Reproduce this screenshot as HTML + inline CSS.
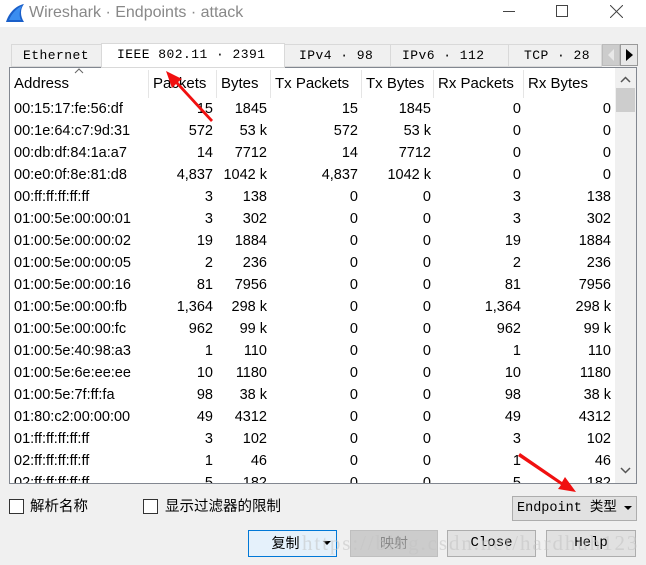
<!DOCTYPE html>
<html><head><meta charset="utf-8"><style>
*{margin:0;padding:0;box-sizing:border-box}
body{width:646px;height:565px;background:#f0f0f0;position:relative;overflow:hidden;font-family:"Liberation Sans","Noto Sans CJK SC",sans-serif}
.abs{position:absolute}
.title{left:0;top:0;width:646px;height:27px;background:#fff}
.tab{position:absolute;top:44px;height:23px;border:1px solid #d9d9d9;background:#f0f0f0;font-family:"Liberation Mono","Noto Sans CJK SC",monospace;font-size:13px;letter-spacing:0.45px;line-height:22px;color:#000;padding-left:11px;white-space:pre;overflow:hidden}
.frame{left:9px;top:67px;width:628px;height:417px;background:#fff;border:1px solid #828790;overflow:hidden}
.hd{position:absolute;top:2px;height:28px;font-size:15px;line-height:28px;border-right:1px solid #e5e5e5;padding-left:4px;color:#000}
.row{position:absolute;left:0;height:22px;width:605px;font-size:14.5px;line-height:22px}
.row span{position:absolute;text-align:right}
.btn{position:absolute;top:530px;height:27px;border:1px solid #adadad;background:#e1e1e1;font-size:14px;line-height:25px;text-align:center}
.cb{position:absolute;top:499px;width:15px;height:15px;border:1px solid #333;background:#fff}
.lbl{position:absolute;top:496px;font-size:14.5px;line-height:22px}
</style></head><body>
<div class="abs title"></div>
<svg class="abs" style="left:5px;top:3px" width="20" height="20" viewBox="0 0 20 20"><path d="M1 19 C4 10 10 3 19 1 C15 6 15 13 19 19 Z" fill="#1a5fc9"/><path d="M4 17 C7 10 12 5 17 3 C14 8 14 13 16 17Z" fill="#3a8df0"/></svg>
<div class="abs" style="left:29px;top:2px;font-size:16px;line-height:22px;color:#888">Wireshark · Endpoints · attack</div>
<div class="abs" style="left:503px;top:11px;width:12px;height:1px;background:#444"></div>
<div class="abs" style="left:556px;top:5px;width:12px;height:12px;border:1px solid #444"></div>
<svg class="abs" style="left:610px;top:5px" width="13" height="13"><path d="M0 0L13 13M13 0L0 13" stroke="#444" stroke-width="1"/></svg>

<div class="tab" style="left:11px;width:91px">Ethernet</div>
<div class="tab" style="left:101px;top:43px;height:25px;width:184px;background:#fff;z-index:2;padding-left:15px">IEEE 802.11 · 2391</div>
<div class="tab" style="left:284px;width:107px;padding-left:14px">IPv4 · 98</div>
<div class="tab" style="left:390px;width:119px">IPv6 · 112</div>
<div class="tab" style="left:508px;width:94px;padding-left:15px">TCP · 28</div>
<div class="abs" style="left:602px;top:44px;width:18px;height:22px;background:#ccc;border:1px solid #bbb"></div>
<svg class="abs" style="left:606px;top:49px" width="10" height="12"><path d="M8 0L2 6L8 12Z" fill="#e8e8e8"/></svg>
<div class="abs" style="left:620px;top:44px;width:18px;height:22px;background:#e8e8e8;border:1px solid #999"></div>
<svg class="abs" style="left:625px;top:49px" width="10" height="12"><path d="M1 0L8 6L1 12Z" fill="#000"/></svg>

<div class="abs frame">
<div class="hd" style="left:0;width:139px">Address</div>
<svg class="abs" style="left:64px;top:0" width="10" height="6"><path d="M1 5L5 1L9 5" stroke="#666" fill="none"/></svg>
<div class="hd" style="left:139px;width:68px">Packets</div>
<div class="hd" style="left:207px;width:54px">Bytes</div>
<div class="hd" style="left:261px;width:91px">Tx Packets</div>
<div class="hd" style="left:352px;width:72px">Tx Bytes</div>
<div class="hd" style="left:424px;width:90px">Rx Packets</div>
<div class="hd" style="left:514px;width:92px">Rx Bytes</div>
<div class="abs" style="left:605px;top:0;width:21px;height:415px;background:#f0f0f0"></div>
<div class="abs" style="left:606px;top:20px;width:19px;height:24px;background:#cdcdcd"></div>
<svg class="abs" style="left:610px;top:8px" width="11" height="7"><path d="M1 6L5.5 1.5L10 6" stroke="#555" stroke-width="1.5" fill="none"/></svg>
<svg class="abs" style="left:610px;top:399px" width="11" height="7"><path d="M1 1L5.5 5.5L10 1" stroke="#555" stroke-width="1.5" fill="none"/></svg>
<div id="rows"></div>
</div>

<div class="cb" style="left:9px"></div><div class="lbl" style="left:30px">解析名称</div>
<div class="cb" style="left:143px"></div><div class="lbl" style="left:165px">显示过滤器的限制</div>
<div class="abs" style="left:512px;top:496px;width:125px;height:25px;border:1px solid #adadad;background:#e1e1e1;font-family:'Liberation Mono','Noto Sans CJK SC',monospace;font-size:13.5px;line-height:23px;padding-left:4px">Endpoint 类型</div>
<svg class="abs" style="left:624px;top:506px" width="8" height="5"><path d="M0 0H8L4 4Z" fill="#000"/></svg>

<div class="btn" style="left:248px;width:89px;background:#e5f1fb;border-color:#0078d7;padding-right:14px">复制</div>
<svg class="abs" style="left:323px;top:541px" width="8" height="5"><path d="M0 0H8L4 4Z" fill="#000"/></svg>
<div class="btn" style="left:350px;width:88px;background:#ccc;border-color:#bfbfbf;color:#888">映射</div>
<div class="btn" style="left:447px;width:89px;font-family:'Liberation Mono',monospace">Close</div>
<div class="btn" style="left:546px;width:90px;font-family:'Liberation Mono',monospace">Help</div>
<div class="abs" style="left:302px;top:530px;font-family:'Liberation Serif',serif;font-size:21px;color:rgba(195,195,195,0.55);line-height:27px;letter-spacing:1.9px">https://blog.csdn.net/hardhuh123</div>

<svg class="abs" style="left:0;top:0" width="646" height="565">
<path d="M211 122 L176 84 L172 88 L166 71 L182 79 L178 82 L213 120Z" fill="#f01010"/>
<path d="M520 453 L562 482 L565 477 L576 492 L558 489 L561 485 L518 456Z" fill="#f01010"/>
</svg>

<script>
var d=[["00:15:17:fe:56:df","15","1845","15","1845","0","0"],
["00:1e:64:c7:9d:31","572","53 k","572","53 k","0","0"],
["00:db:df:84:1a:a7","14","7712","14","7712","0","0"],
["00:e0:0f:8e:81:d8","4,837","1042 k","4,837","1042 k","0","0"],
["00:ff:ff:ff:ff:ff","3","138","0","0","3","138"],
["01:00:5e:00:00:01","3","302","0","0","3","302"],
["01:00:5e:00:00:02","19","1884","0","0","19","1884"],
["01:00:5e:00:00:05","2","236","0","0","2","236"],
["01:00:5e:00:00:16","81","7956","0","0","81","7956"],
["01:00:5e:00:00:fb","1,364","298 k","0","0","1,364","298 k"],
["01:00:5e:00:00:fc","962","99 k","0","0","962","99 k"],
["01:00:5e:40:98:a3","1","110","0","0","1","110"],
["01:00:5e:6e:ee:ee","10","1180","0","0","10","1180"],
["01:00:5e:7f:ff:fa","98","38 k","0","0","98","38 k"],
["01:80:c2:00:00:00","49","4312","0","0","49","4312"],
["01:ff:ff:ff:ff:ff","3","102","0","0","3","102"],
["02:ff:ff:ff:ff:ff","1","46","0","0","1","46"],
["02:ff:ff:ff:ff:ff","5","182","0","0","5","182"]];
var R=[203,257,348,421,511,601],h="";
d.forEach(function(r,i){h+='<div class="row" style="top:'+(30+i*22)+'px"><span style="left:4px;text-align:left">'+r[0]+'</span>';
for(var j=1;j<7;j++)h+='<span style="right:'+(605-R[j-1])+'px">'+r[j]+'</span>';h+='</div>';});
document.getElementById('rows').innerHTML=h;
</script>
</body></html>
